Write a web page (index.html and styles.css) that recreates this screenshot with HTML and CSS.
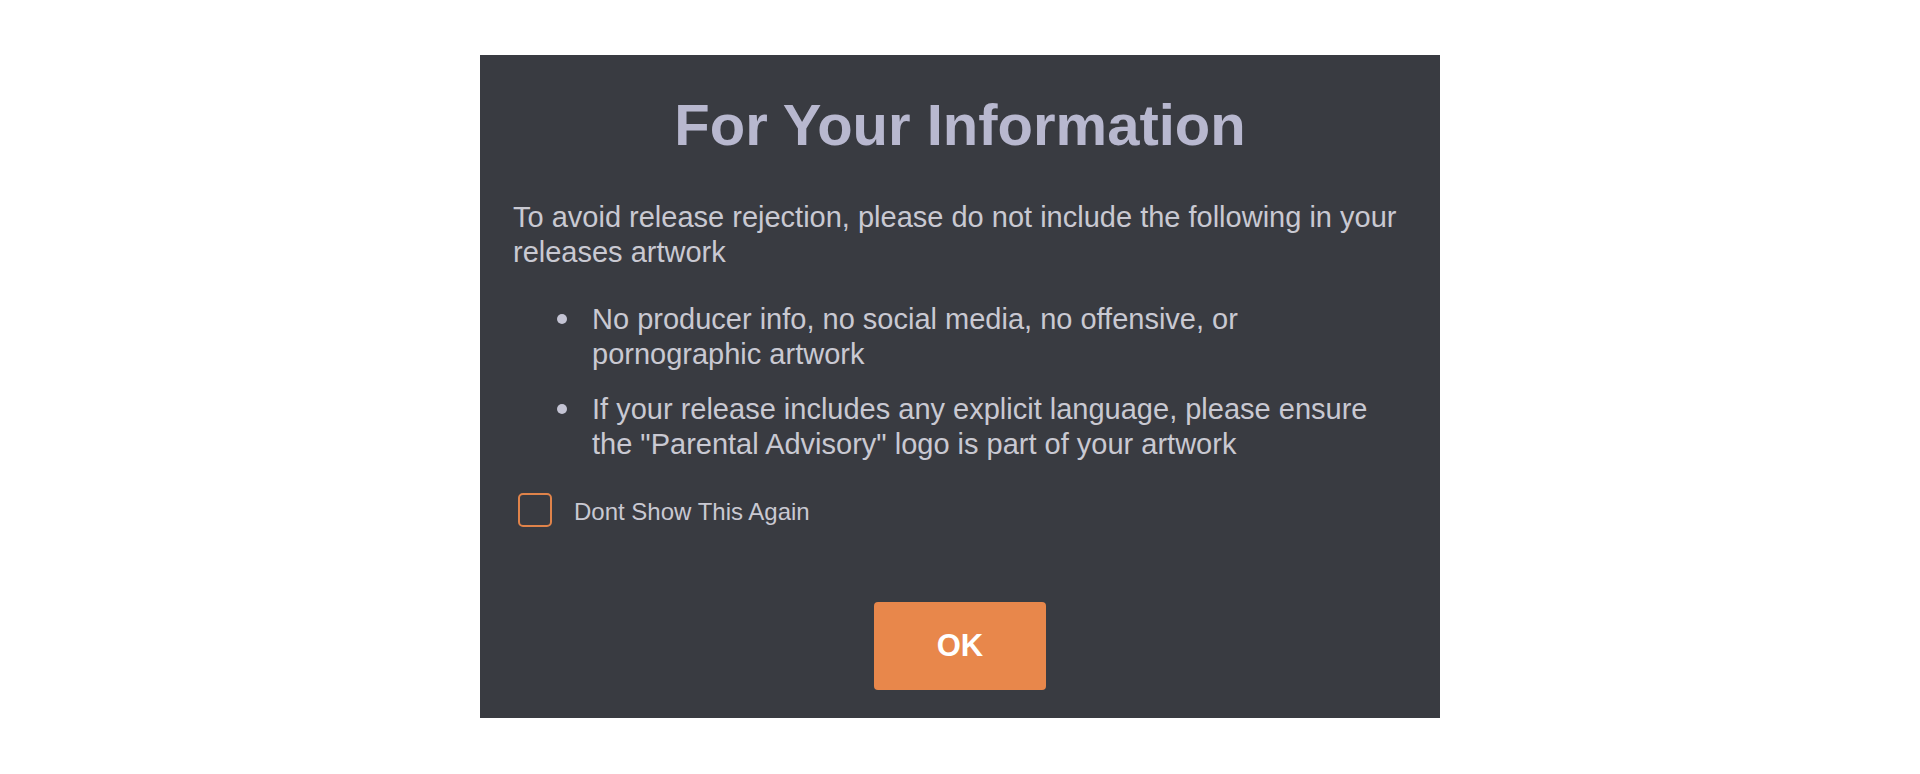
FILE: index.html
```html
<!DOCTYPE html>
<html lang="en">
<head>
    <meta charset="UTF-8">
    <meta name="viewport" content="width=device-width, initial-scale=1.0">
    <title>For Your Information</title>
    <link rel="stylesheet" href="styles.css">
</head>
<body>

    <div class="modal">
        <h1 class="modal-title">For Your Information</h1>
        <p class="modal-text">To avoid release rejection, please do not include the following in your releases artwork</p>
        <ul class="rules">
            <li>No producer info, no social media, no offensive, or pornographic artwork</li>
            <li>If your release includes any explicit language, please ensure the "Parental Advisory" logo is part of your artwork</li>
        </ul>
        <label class="check-row">
            <input type="checkbox" id="dont-show">
            <span class="check-box"></span>
            <span class="check-label">Dont Show This Again</span>
        </label>
        <div class="actions">
            <button type="button" class="ok-btn">OK</button>
        </div>
    </div>

</body>
</html>
```

FILE: styles.css
```css
body {
    margin: 0;
    background: #ffffff;
    font-family: "Liberation Sans", Arial, sans-serif;
}
.modal {
    width: 960px;
    box-sizing: border-box;
    margin: 55px auto 0;
    padding: 37px 33px 28px;
    background-color: #393b41;
    color: #c9c9d2;
}
.modal-title {
    margin: 0;
    font-size: 58px;
    line-height: 66px;
    font-weight: bold;
    text-align: center;
    color: #b8b8cf;
}
.modal-text {
    margin: 42px 0 0;
    font-size: 29px;
    line-height: 35px;
}
.rules {
    list-style: none;
    margin: 32px 0 0;
    padding: 0 0 0 44px;
    font-size: 29px;
    line-height: 35px;
}
.rules li {
    display: flex;
    gap: 25px;
}
.rules li + li {
    margin-top: 20px;
}
.rules li::before {
    content: '';
    flex: none;
    width: 10px;
    height: 10px;
    margin-top: 12px;
    border-radius: 50%;
    background-color: #c4c4d4;
}
.check-row {
    display: flex;
    align-items: center;
    gap: 22px;
    margin: 29px 0 0 5px;
    cursor: pointer;
}
.check-row input {
    display: none;
}
.check-box {
    width: 34px;
    height: 34px;
    box-sizing: border-box;
    border: 2px solid #e0834a;
    border-radius: 5px;
}
.check-label {
    font-size: 24px;
    line-height: 34px;
    padding-top: 4px;
    color: #c9c9d2;
}
.actions {
    display: flex;
    justify-content: center;
    margin-top: 73px;
}
.ok-btn {
    width: 172px;
    height: 88px;
    border: none;
    border-radius: 4px;
    background-color: #e8874b;
    color: #ffffff;
    font-family: "Liberation Sans", Arial, sans-serif;
    font-size: 31px;
    font-weight: bold;
    cursor: pointer;
}
.ok-btn:hover {
    background-color: #d9773b;
}
```
